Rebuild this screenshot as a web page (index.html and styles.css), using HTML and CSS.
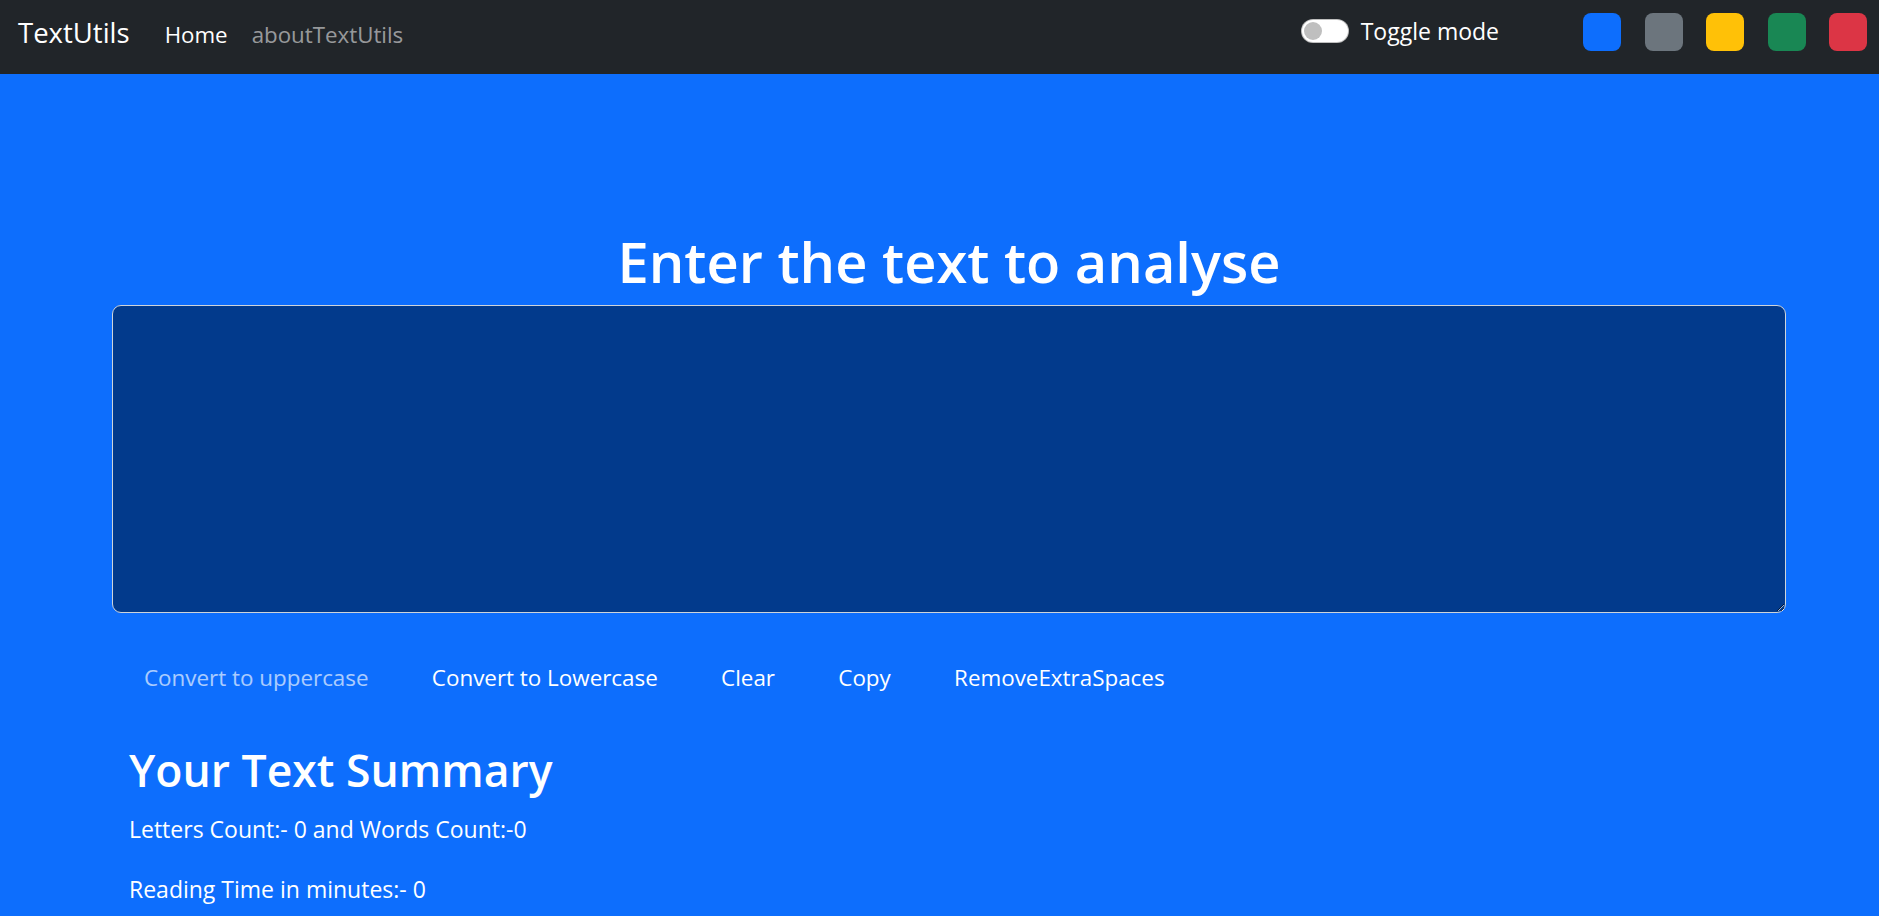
FILE: index.html
```html
<!DOCTYPE html>
<html lang="en">
<head>
<meta charset="utf-8">
<title>TextUtils</title>
<link rel="stylesheet" href="styles.css">
</head>
<body>
<nav class="navbar">
  <a class="brand" href="#">TextUtils</a>
  <ul class="nav-links">
    <li><a class="nav-link active" href="#">Home</a></li>
    <li><a class="nav-link" href="#">aboutTextUtils</a></li>
  </ul>
  <div class="nav-right">
    <label class="switch">
      <span class="switch-track"><span class="switch-knob"></span></span>
      <span class="switch-label">Toggle mode</span>
    </label>
    <div class="swatches">
      <span class="swatch sw-blue"></span>
      <span class="swatch sw-gray"></span>
      <span class="swatch sw-yellow"></span>
      <span class="swatch sw-green"></span>
      <span class="swatch sw-red"></span>
    </div>
  </div>
</nav>
<main class="main">
  <section class="editor">
    <h1 class="title">Enter the text to analyse</h1>
    <textarea class="textbox" rows="8"></textarea>
  </section>
  <div class="actions">
    <button class="btn disabled" disabled>Convert to uppercase</button>
    <button class="btn">Convert to Lowercase</button>
    <button class="btn">Clear</button>
    <button class="btn">Copy</button>
    <button class="btn">RemoveExtraSpaces</button>
  </div>
  <section class="summary">
    <h2 class="summary-title">Your Text Summary</h2>
    <p class="stat">Letters Count:- 0 and Words Count:-0</p>
    <p class="stat">Reading Time in minutes:- 0</p>
  </section>
</main>
</body>
</html>
```
FILE: styles.css
```css
* { box-sizing: border-box; }
html, body { margin: 0; padding: 0; }
body {
  background: #0d6efd;
  color: #fff;
  font-family: "Open Sans", "Noto Sans", sans-serif;
  font-size: 23px;
  line-height: 36px;
  overflow: hidden;
}

.navbar {
  height: 74px;
  background: #212529;
  display: flex;
  align-items: flex-start;
  padding: 0 12px 0 18px;
}
.brand {
  font-size: 27.5px;
  line-height: 45px;
  margin-top: 10px;
  color: #fff;
  text-decoration: none;
  margin-right: 23px;
}
.nav-links {
  list-style: none;
  margin: 16.5px 0 0 0;
  padding: 0;
  display: flex;
  font-size: 22.3px;
}
.nav-link {
  display: block;
  padding: 0 12px;
  color: rgba(255,255,255,0.55);
  text-decoration: none;
}
.nav-link.active { color: #fff; }

.nav-right {
  margin-left: auto;
  display: flex;
  align-items: flex-start;
}
.switch {
  display: flex;
  align-items: flex-start;
  margin-top: 13px;
  margin-right: 84px;
}
.switch-track {
  width: 48px;
  height: 24px;
  margin-top: 6px;
  border-radius: 12px;
  background: #fff;
  border: 1px solid rgba(0,0,0,0.25);
  display: flex;
  align-items: center;
  padding-left: 2px;
  margin-right: 12px;
}
.switch-knob {
  width: 18px;
  height: 18px;
  border-radius: 50%;
  background: #bfbfbf;
}
.switch-label { color: #fff; }

.swatches {
  display: flex;
  gap: 23.5px;
  margin-top: 13px;
}
.swatch {
  width: 38px;
  height: 38px;
  border-radius: 8px;
}
.sw-blue { background: #0d6efd; }
.sw-gray { background: #6c757d; }
.sw-yellow { background: #ffc107; }
.sw-green { background: #198754; }
.sw-red { background: #dc3545; }

.main {
  padding-top: 150.5px;
}
.editor {
  margin-left: 112px;
  width: 1674px;
}
.title {
  margin: 0 0 8.5px 0;
  font-size: 56px;
  line-height: 72px;
  font-weight: 600;
  text-align: center;
}
.textbox {
  display: block;
  width: 1674px;
  height: 308px;
  background: #023a8c;
  color: #fff;
  border: 1px solid #ced4da;
  border-radius: 9px;
  font: inherit;
  padding: 9px 18px;
}

.actions {
  display: flex;
  gap: 25.3px;
  margin: 37px 0 0 125px;
}
.btn {
  font: inherit;
  font-size: 22.4px;
  color: #fff;
  background: transparent;
  border: 1px solid transparent;
  padding: 9px 18px;
  line-height: 36px;
  cursor: pointer;
}
.btn.disabled { opacity: 0.65; cursor: default; }

.summary {
  margin: 36px 0 0 129px;
}
.summary-title {
  margin: 0 0 13px 0;
  font-size: 44.5px;
  line-height: 56px;
  font-weight: 600;
}
.stat {
  margin: 0 0 24px 0;
}
```
